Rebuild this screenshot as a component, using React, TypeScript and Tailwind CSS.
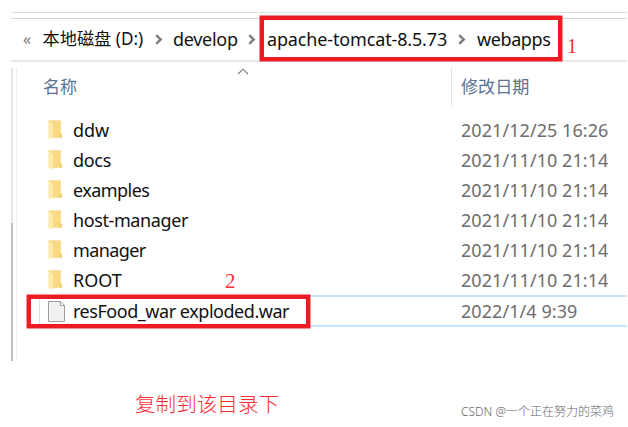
import React from "react";

const folders = [
  { name: "ddw", date: "2021/12/25 16:26", tracking: "tracking-[-0.1px]" },
  { name: "docs", date: "2021/11/10 21:14", tracking: "tracking-[-0.3px]" },
  { name: "examples", date: "2021/11/10 21:14", tracking: "tracking-[-0.55px]" },
  { name: "host-manager", date: "2021/11/10 21:14", tracking: "tracking-[-0.4px]" },
  { name: "manager", date: "2021/11/10 21:14", tracking: "tracking-[-0.6px]" },
  { name: "ROOT", date: "2021/11/10 21:14", tracking: "tracking-[0px]" },
];

function FolderIcon() {
  return (
    <svg className="block shrink-0" width="14" height="20" viewBox="0 0 14 20">
      <path d="M0.8 0.5H12.8v12.3l1.1 1.2v3.8H4.5z" fill="#f9da80" />
      <path d="M11.5 13.5h2.4v4.2h-2.4z" fill="#f1cf74" />
      <path d="M0.3 0.5L5 4.2v12.3l-1.3 3.2L0.3 17.8z" fill="#ffebad" />
      <path d="M0.5 1H12.8" stroke="#f7dc92" />
    </svg>
  );
}

function FileIcon() {
  return (
    <svg className="block shrink-0" width="17" height="21" viewBox="0 0 17 21">
      <path d="M0.6 0.6h12l3.8 3.9v15.9H0.6z" fill="#fff" stroke="#929292" />
      <path d="M2 2h9.5v4h3.4v13H2z" fill="#eff0f1" />
      <path d="M12.3 0.6v4.1h4" fill="#fff" stroke="#929292" />
    </svg>
  );
}

function Chevron() {
  return (
    <svg className="block" width="8" height="11" viewBox="0 0 8 11">
      <path d="M1.2 1.2L5.7 5.5 1.2 9.8" fill="none" stroke="#808080" strokeWidth="2.5" />
    </svg>
  );
}

export default function App() {
  return (
    <div className="relative h-[427px] w-[628px] overflow-hidden bg-white pl-[11px] pr-[1px] pt-[12px] font-['Noto_Sans','Noto_Sans_CJK_SC',sans-serif] text-[18px] leading-[30px] text-[#111] whitespace-nowrap">
      <div className="h-[6px] border-t border-[#dedede]" />
      <div className="flex h-[44px] items-center border-t border-b-2 border-t-[#d5d5d5] border-b-[#e8e8e8] pb-[1px]">
        <span className="ml-[12px] w-[19.5px] text-[16px] text-[#777]">«</span>
        <span className="w-[112.5px] text-[17.2px]">本地磁盘 (D:)</span>
        <span className="w-[18px] pt-[1px]"><Chevron /></span>
        <span className="w-[75px] tracking-[-0.3px]">develop</span>
        <span className="w-[19px] pt-[1px]"><Chevron /></span>
        <span className="w-[191px] tracking-[-0.15px]">apache-tomcat-8.5.73</span>
        <span className="w-[19px] pt-[1px]"><Chevron /></span>
        <span className="tracking-[-0.4px]">webapps</span>
      </div>

      <div className="mt-[6px] flex h-[293px]">
        <div className="flex w-[6px] flex-col">
          <div className="h-[155px] border-l-2 border-r border-l-[#e7e7e7] border-r-[#efefef]" />
          <div className="flex-1 border-l-2 border-r border-l-[#bfbfbf] border-r-[#efefef]" />
        </div>
        <div className="flex flex-1 flex-col">
          <div className="flex h-[38px] text-[17.1px] text-[#5b7291]">
            <div className="flex w-[435px] items-center border-r border-[#e3e3e3] pl-[26px]">
              <span className="w-[194px]">名称</span>
              <svg className="-mt-[31px]" width="12" height="7" viewBox="0 0 12 7">
                <path d="M1 6l5-4.8L11 6" fill="none" stroke="#777" strokeWidth="1.1" />
              </svg>
            </div>
            <div className="flex items-center pl-[9px]">修改日期</div>
          </div>
          <div className="pt-[8.6px]">
            {folders.map((f) => (
              <div key={f.name} className="flex h-[30.1px] items-center pl-[31px]">
                <FolderIcon />
                <span className={"ml-[11px] w-[388px] " + f.tracking}>{f.name}</span>
                <span className="tracking-[0.06px] text-[#6d6d6d]">{f.date}</span>
              </div>
            ))}
            <div className="ml-[22px] flex h-[32px] items-center border-y-2 border-l border-[#c5e5fb] pl-[8px]">
              <FileIcon />
              <span className="ml-[8px] w-[388px] tracking-[-0.46px]">resFood_war exploded.war</span>
              <span className="tracking-[0.06px] text-[#6d6d6d]">2022/1/4 9:39</span>
            </div>
          </div>
        </div>
      </div>

      <div className="flex items-start pt-[28px] font-light">
        <span className="ml-[124px] w-[326px] text-[20.6px] text-[#fb2d36]">复制到该目录下</span>
        <span className="mt-[8px] text-[12px] text-[#666]">CSDN @一个正在努力的菜鸡</span>
      </div>

      <div className="absolute left-[260px] top-[16px] h-[45px] w-[302px] border-4 border-[#ed1c24] shadow-[0_0_0_0.5px_#ed1c24]" />
      <div className="absolute left-[27px] top-[295px] h-[33px] w-[283px] border-4 border-[#ed1c24] shadow-[0_0_0_0.5px_#ed1c24]" />
      <span className="absolute left-[567px] top-[31px] font-['Liberation_Serif',serif] text-[20px] text-[#fb2d36]">1</span>
      <span className="absolute left-[225px] top-[266px] font-['Liberation_Serif',serif] text-[21px] text-[#fb2d36]">2</span>
    </div>
  );
}
